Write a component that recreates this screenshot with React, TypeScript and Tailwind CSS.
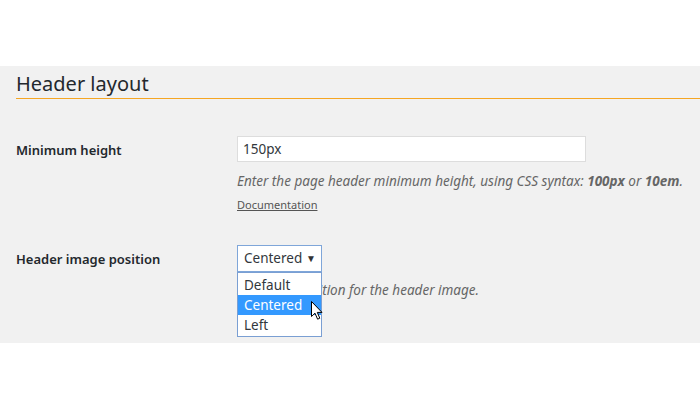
const font = { fontFamily: '"Noto Sans", "Open Sans", Arial, sans-serif' }

function Cursor() {
  return (
    <svg
      className="pointer-events-none absolute left-[74px] top-[56px] z-20"
      width="13"
      height="20"
      viewBox="0 0 13 20"
    >
      <path
        d="M0.5 0.5 L0.5 15.5 L4 12.2 L6.6 18.2 L8.8 17.2 L6.3 11.4 L11 11.4 Z"
        fill="#fff"
        stroke="#000"
        strokeWidth="1"
        strokeLinejoin="miter"
      />
    </svg>
  )
}

function Row({ label, children }: { label: string; children: React.ReactNode }) {
  return (
    <div className="grid grid-cols-[221px_1fr]">
      <div className="mt-[2px] flex h-[26px] items-center text-[13px] font-semibold text-[#23282d]">{label}</div>
      <div>{children}</div>
    </div>
  )
}

export default function App() {
  const options = ['Default', 'Centered', 'Left']
  return (
    <div className="h-[409px] w-[700px] bg-white" style={font}>
      <div className="h-[66px]" />
      <section className="h-[277px] bg-[#f1f1f1] pl-4">
        <h2 className="border-b border-[#f5a623] pt-[4px] text-[20px] leading-[28px] font-normal text-[#23282d]">
          Header layout
        </h2>

        <div className="mt-[37px]">
          <Row label="Minimum height">
            <input
              readOnly
              value="150px"
              className="block h-[26px] w-[349px] border border-[#dddddd] bg-white px-[5px] text-[13.5px] text-[#32373c] outline-none"
              style={font}
            />
            <p className="mt-[9px] text-[13.5px] leading-[20px] italic text-[#666]">
              Enter the page header minimum height, using CSS syntax: <b className="font-bold">100px</b> or{' '}
              <b className="font-bold">10em</b>.
            </p>
            <a className="mt-[6px] block text-[11px] leading-[16px] text-[#555] underline">Documentation</a>
          </Row>
        </div>

        <div className="mt-[32px]">
          <Row label="Header image position">
            <div className="relative w-[85px]">
              <div className="flex h-[27px] items-center justify-between border border-[#7fa6d9] bg-white pl-[6px] pr-[5px] text-[13.5px] text-[#32373c]">
                <span>Centered</span>
                <span className="text-[10px] text-[#333]">▼</span>
              </div>
              <div className="absolute left-0 top-full z-10 w-[85px] border border-[#7a9fd3] bg-white pt-[2px] pb-[1px]">
                {options.map((o) => (
                  <div
                    key={o}
                    className={
                      o === 'Centered'
                        ? 'flex h-[20px] items-center bg-[#3399ff] pl-[6px] text-[13.5px] text-white'
                        : 'flex h-[20px] items-center pl-[6px] text-[13.5px] text-[#32373c]'
                    }
                  >
                    {o}
                  </div>
                ))}
              </div>
              <Cursor />
            </div>
            <p className="mt-[8px] text-[13.5px] leading-[20px] italic text-[#666]">
              Select the position for the header image.
            </p>
          </Row>
        </div>
      </section>
    </div>
  )
}
